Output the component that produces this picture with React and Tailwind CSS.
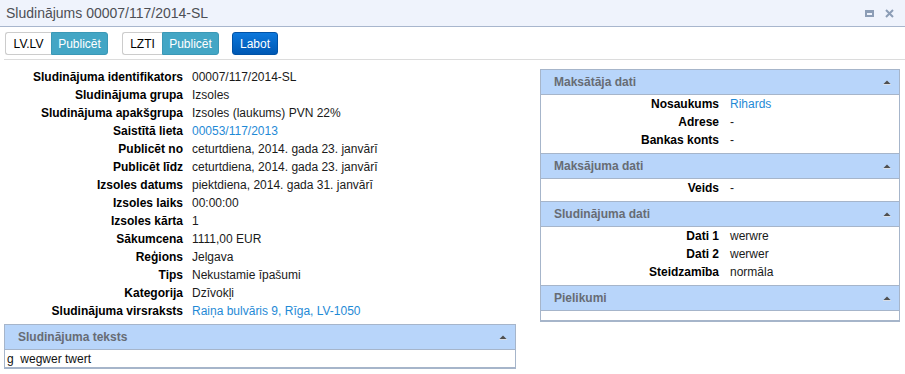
import React from "react";

const rows = [
  ["Sludinājuma identifikators", "00007/117/2014-SL"],
  ["Sludinājuma grupa", "Izsoles"],
  ["Sludinājuma apakšgrupa", "Izsoles (laukums) PVN 22%"],
  ["Saistītā lieta", "00053/117/2013", true],
  ["Publicēt no", "ceturtdiena, 2014. gada 23. janvārī"],
  ["Publicēt līdz", "ceturtdiena, 2014. gada 23. janvārī"],
  ["Izsoles datums", "piektdiena, 2014. gada 31. janvārī"],
  ["Izsoles laiks", "00:00:00"],
  ["Izsoles kārta", "1"],
  ["Sākumcena", "1111,00 EUR"],
  ["Reģions", "Jelgava"],
  ["Tips", "Nekustamie īpašumi"],
  ["Kategorija", "Dzīvokļi"],
  ["Sludinājuma virsraksts", "Raiņa bulvāris 9, Rīga, LV-1050", true],
];

const sections = [
  {
    title: "Maksātāja dati",
    rows: [
      ["Nosaukums", "Rihards", true],
      ["Adrese", "-"],
      ["Bankas konts", "-"],
    ],
  },
  { title: "Maksājuma dati", rows: [["Veids", "-"]] },
  {
    title: "Sludinājuma dati",
    rows: [
      ["Dati 1", "werwre"],
      ["Dati 2", "werwer"],
      ["Steidzamība", "normāla"],
    ],
  },
  { title: "Pielikumi", rows: [] },
];

const Caret = () => (
  <svg width="8" height="5" viewBox="0 0 8 5" className="shrink-0">
    <polygon points="0.5,4 4,0.5 7.5,4" fill="#4f4f4f" />
    <line x1="0" y1="4.5" x2="8" y2="4.5" stroke="#d8dde6" strokeWidth="1" />
  </svg>
);

const PanelHeader = ({ title }) => (
  <div className="h-[25px] flex items-center justify-between pl-[13px] pr-[8px] bg-[#b8d5fa] border-b border-[#a6b5ca]">
    <span className="font-bold text-[12px] text-[#676c74]">{title}</span>
    <Caret />
  </div>
);

const Pair = ({ label, value, link }) => (
  <div className="flex h-[18px] items-center">
    <div className="w-1/2 text-right font-bold text-black pr-[1px] whitespace-nowrap">{label}</div>
    <div className={"pl-[10px] whitespace-nowrap " + (link ? "text-[#1f8ad6]" : "text-[#1a1a1a]")}>
      {value}
    </div>
  </div>
);

export default function App() {
  return (
    <div className="w-[905px] h-[374px] bg-white overflow-hidden font-['Liberation_Sans',Arial,sans-serif] text-[12px]">
      {/* title bar */}
      <div className="h-[27px] flex items-center justify-between pl-[6px] pr-[11px] bg-[#eff3fc] border-b border-[#a8b6cd]">
        <span className="text-[14px] text-[#4d4f55]">Sludinājums 00007/117/2014-SL</span>
        <div className="flex items-center gap-[11px]">
          <div className="w-[9px] h-[7px] border-2 border-[#8c9db6] border-t-[3px]" />
          <svg width="9" height="9" viewBox="0 0 9 9">
            <path d="M1 1 L8 8 M8 1 L1 8" stroke="#8c9db6" strokeWidth="2" />
          </svg>
        </div>
      </div>

      {/* toolbar */}
      <div className="ml-[4px] pl-[1px] pt-[5px] pb-[4px] flex items-center border-b border-[#dcdcdc]">
        <div className="flex h-[23px]">
          <button className="w-[46px] border border-r-0 border-[#cccccc] rounded-l-[3px] bg-white text-black">LV.LV</button>
          <button className="w-[57px] bg-[#43a6c5] border border-[#3b98b6] rounded-r-[3px] text-white">Publicēt</button>
        </div>
        <div className="flex h-[23px] ml-[14px]">
          <button className="w-[40px] border border-r-0 border-[#cccccc] rounded-l-[3px] bg-white text-black">LZTI</button>
          <button className="w-[57px] bg-[#43a6c5] border border-[#3b98b6] rounded-r-[3px] text-white">Publicēt</button>
        </div>
        <button className="ml-[13px] h-[23px] w-[46px] rounded-[3px] border border-[#0052a6] bg-gradient-to-b from-[#0d78dc] to-[#0058b4] text-white">
          Labot
        </button>
      </div>

      {/* content */}
      <div className="flex">
        <div className="w-[520px] pt-[8px]">
          {rows.map(([label, value, link]) => (
            <div key={label} className="flex h-[18px] items-center">
              <div className="w-[184px] text-right font-bold text-black whitespace-nowrap pr-[1px]">{label}</div>
              <div className={"pl-[8px] whitespace-nowrap " + (link ? "text-[#1f8ad6]" : "text-[#1a1a1a]")}>
                {value}
              </div>
            </div>
          ))}
          <div className="mt-[4px] ml-[4px] w-[512px] border border-[#a6b5ca] border-b-2">
            <PanelHeader title="Sludinājuma teksts" />
            <div className="h-[17px] flex items-center pl-[2px] text-[#111] whitespace-pre">g  wegwer twert</div>
          </div>
        </div>

        <div className="ml-[20px] mt-[9px] w-[360px] border border-[#a6b5ca] border-b-2 self-start">
          {sections.map((s, i) => (
            <div key={s.title}>
              <PanelHeader title={s.title} />
              <div
                className={
                  (s.rows.length ? "pb-[4px]" : "h-[9px]") +
                  (i < sections.length - 1 ? " border-b border-[#a6b5ca]" : "")
                }
              >
                {s.rows.map(([l, v, link]) => (
                  <Pair key={l} label={l} value={v} link={link} />
                ))}
              </div>
            </div>
          ))}
        </div>
      </div>

      <div className="mt-[5px] border-t-2 border-[#a3a3a3]" />
    </div>
  );
}
